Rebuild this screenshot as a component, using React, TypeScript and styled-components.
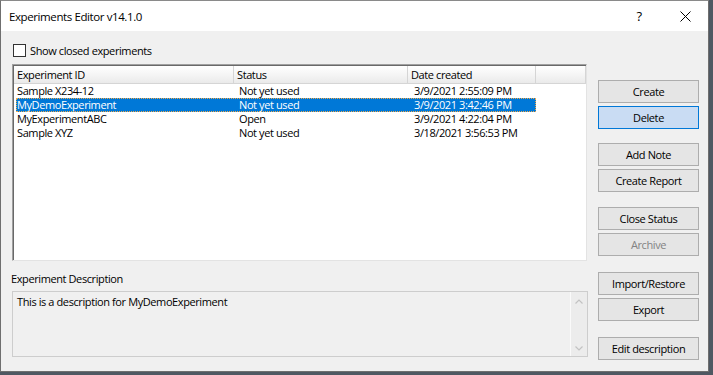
import styled, { createGlobalStyle } from "styled-components";

const GlobalStyle = createGlobalStyle`
  html, body {
    margin: 0;
    padding: 0;
    background: #4f5862;
  }
  body {
    font-family: "Open Sans", "Noto Sans", sans-serif;
    font-size: 11px;
    letter-spacing: -0.4px;
    color: #000;
  }
  * { box-sizing: border-box; }
`;

const Window = styled.div`
  width: 709px;
  height: 372px;
  border: 1px solid #6f6f6f;
  border-top-color: #8a8a8a;
  background: #f0f0f0;
  display: flex;
  flex-direction: column;
`;

const TitleBar = styled.div`
  height: 30px;
  background: #fff;
  display: flex;
  align-items: center;
`;

const Title = styled.div`
  flex: 1;
  padding-left: 8px;
  font-size: 11.5px;
`;

const CaptionButton = styled.div`
  width: 46px;
  height: 30px;
  display: flex;
  align-items: center;
  justify-content: center;
  font-size: 13px;
  color: #000;
`;

const Client = styled.div`
  flex: 1;
  display: flex;
  padding-left: 11px;
  gap: 11px;
`;

const LeftColumn = styled.div`
  width: 575px;
  display: flex;
  flex-direction: column;
  padding-top: 13px;
`;

const CheckRow = styled.label`
  display: flex;
  align-items: center;
  gap: 4px;
  height: 13px;
  margin-left: 1px;
`;

const CheckBox = styled.span`
  width: 13px;
  height: 13px;
  border: 1px solid #333;
  background: #fff;
`;

const ListView = styled.div`
  margin-top: 7px;
  height: 197px;
  border-top: 1px solid #a0a0a0;
  border-left: 1px solid #a0a0a0;
  border-right: 1px solid #e3e3e3;
  border-bottom: 1px solid #e3e3e3;
  background: #fff;
  box-shadow: inset 1px 1px 0 #696969;
  padding: 1px 0 0 1px;
  display: flex;
  flex-direction: column;
`;

const Header = styled.div`
  display: flex;
  height: 18px;
  background: linear-gradient(#ffffff, #f3f3f3 60%, #eaeaea);
  border-bottom: 1px solid #d5d5d5;
`;

const HeaderCell = styled.div<{ $w?: number }>`
  ${(p) => (p.$w ? `width: ${p.$w}px;` : "flex: 1;")}
  border-right: 1px solid #d5d5d5;
  padding-left: 3px;
  line-height: 17px;
  white-space: nowrap;
`;

const Row = styled.div<{ $selected?: boolean }>`
  display: grid;
  grid-template-columns: 218px 174px 128px;
  width: 520px;
  height: 14px;
  margin-left: 2px;
  line-height: 14px;
  background: ${(p) => (p.$selected ? "#0078d7" : "transparent")};
  color: ${(p) => (p.$selected ? "#fff" : "#000")};
  outline: ${(p) => (p.$selected ? "1px dotted #f2a94a" : "none")};
  outline-offset: -1px;
`;

const Cell = styled.div<{ $pad: number }>`
  padding-left: ${(p) => p.$pad}px;
  white-space: nowrap;
  overflow: hidden;
`;

const SectionLabel = styled.div`
  margin-top: 11px;
  line-height: 14px;
  margin-left: -1px;
`;

const DescriptionBox = styled.div`
  margin-top: 5px;
  height: 66px;
  width: 576px;
  border: 1px solid #cdcdcd;
  background: #f0f0f0;
  display: flex;
`;

const DescriptionText = styled.div`
  flex: 1;
  padding: 3px 0 0 4px;
  line-height: 14px;
`;

const ScrollBar = styled.div`
  width: 17px;
  border-left: 1px solid #fafafa;
  background: #ececec;
  display: flex;
  flex-direction: column;
  justify-content: space-between;
  align-items: center;
  padding: 7px 0 5px;
`;

const RightColumn = styled.div`
  width: 101px;
  display: flex;
  flex-direction: column;
`;

const ButtonGroup = styled.div<{ $top: number }>`
  display: flex;
  flex-direction: column;
  gap: 3px;
  margin-top: ${(p) => p.$top}px;
`;

const Button = styled.div<{ $focused?: boolean; $disabled?: boolean }>`
  height: 23px;
  border: 1px solid ${(p) => (p.$focused ? "#0078d7" : "#adadad")};
  background: ${(p) => (p.$focused ? "#c9dcf3" : "#e5e5e5")};
  color: ${(p) => (p.$disabled ? "#838383" : "#000")};
  display: flex;
  align-items: center;
  justify-content: center;
  white-space: nowrap;
`;

const Chevron = ({ up }: { up?: boolean }) => (
  <svg width="8" height="5" viewBox="0 0 8 5">
    <path
      d={up ? "M0.5 4.5 L4 1 L7.5 4.5" : "M0.5 0.5 L4 4 L7.5 0.5"}
      fill="none"
      stroke="#c2c2c2"
      strokeWidth="1.2"
    />
  </svg>
);

const experiments = [
  { id: "Sample X234-12", status: "Not yet used", date: "3/9/2021 2:55:09 PM" },
  { id: "MyDemoExperiment", status: "Not yet used", date: "3/9/2021 3:42:46 PM" },
  { id: "MyExperimentABC", status: "Open", date: "3/9/2021 4:22:04 PM" },
  { id: "Sample XYZ", status: "Not yet used", date: "3/18/2021 3:56:53 PM" },
];

const groups: { top: number; buttons: { label: string; focused?: boolean; disabled?: boolean }[] }[] = [
  { top: 49, buttons: [{ label: "Create" }, { label: "Delete", focused: true }] },
  { top: 14, buttons: [{ label: "Add Note" }, { label: "Create Report" }] },
  { top: 15, buttons: [{ label: "Close Status" }, { label: "Archive", disabled: true }] },
  { top: 16, buttons: [{ label: "Import/Restore" }, { label: "Export" }] },
  { top: 16, buttons: [{ label: "Edit description" }] },
];

export default function App() {
  return (
    <>
      <GlobalStyle />
      <Window>
        <TitleBar>
          <Title>Experiments Editor v14.1.0</Title>
          <CaptionButton>?</CaptionButton>
          <CaptionButton>
            <svg width="11" height="11" viewBox="0 0 11 11">
              <path d="M0.5 0.5 L10.5 10.5 M10.5 0.5 L0.5 10.5" stroke="#000" strokeWidth="1" />
            </svg>
          </CaptionButton>
        </TitleBar>
        <Client>
          <LeftColumn>
            <CheckRow>
              <CheckBox />
              Show closed experiments
            </CheckRow>
            <ListView>
              <Header>
                <HeaderCell $w={220}>Experiment ID</HeaderCell>
                <HeaderCell $w={174}>Status</HeaderCell>
                <HeaderCell $w={128}>Date created</HeaderCell>
                <HeaderCell />
              </Header>
              {experiments.map((e) => (
                <Row key={e.id} $selected={e.id === "MyDemoExperiment"}>
                  <Cell $pad={1}>{e.id}</Cell>
                  <Cell $pad={5}>{e.status}</Cell>
                  <Cell $pad={6}>{e.date}</Cell>
                </Row>
              ))}
            </ListView>
            <SectionLabel>Experiment Description</SectionLabel>
            <DescriptionBox>
              <DescriptionText>This is a description for MyDemoExperiment</DescriptionText>
              <ScrollBar>
                <Chevron up />
                <Chevron />
              </ScrollBar>
            </DescriptionBox>
          </LeftColumn>
          <RightColumn>
            {groups.map((g, i) => (
              <ButtonGroup key={i} $top={g.top}>
                {g.buttons.map((b) => (
                  <Button key={b.label} $focused={b.focused} $disabled={b.disabled}>
                    {b.label}
                  </Button>
                ))}
              </ButtonGroup>
            ))}
          </RightColumn>
        </Client>
      </Window>
    </>
  );
}
